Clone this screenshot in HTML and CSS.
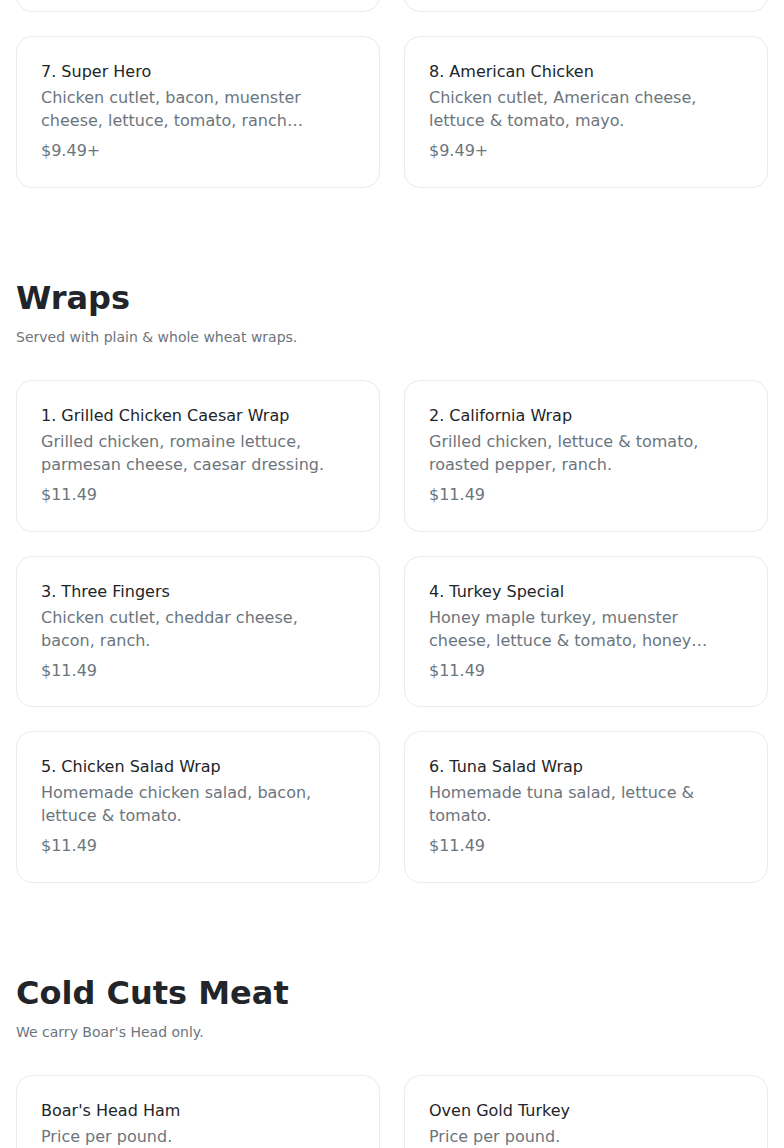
FILE: index.html
```html
<!DOCTYPE html>
<html lang="en">
<head>
<meta charset="utf-8">
<title>Menu</title>
<link rel="stylesheet" href="styles.css">
</head>
<body>
<main class="menu">
  <section class="section section-first">
    <div class="grid">
      <div class="card">
        <div class="item-name">5. Chicken Parm Hero</div>
        <div class="item-desc">Chicken cutlet, marinara sauce, mozzarella cheese.</div>
        <div class="item-price">$9.49+</div>
      </div>
      <div class="card">
        <div class="item-name">6. Buffalo Chicken</div>
        <div class="item-desc">Buffalo chicken, lettuce &amp; tomato, blue cheese.</div>
        <div class="item-price">$9.49+</div>
      </div>
      <div class="card">
        <div class="item-name">7. Super Hero</div>
        <div class="item-desc">Chicken cutlet, bacon, muenster cheese, lettuce, tomato, ranch dressing.</div>
        <div class="item-price">$9.49+</div>
      </div>
      <div class="card">
        <div class="item-name">8. American Chicken</div>
        <div class="item-desc">Chicken cutlet, American cheese, lettuce &amp; tomato, mayo.</div>
        <div class="item-price">$9.49+</div>
      </div>
    </div>
  </section>

  <section class="section">
    <h2 class="section-title">Wraps</h2>
    <p class="section-sub">Served with plain &amp; whole wheat wraps.</p>
    <div class="grid">
      <div class="card">
        <div class="item-name">1. Grilled Chicken Caesar Wrap</div>
        <div class="item-desc">Grilled chicken, romaine lettuce, parmesan cheese, caesar dressing.</div>
        <div class="item-price">$11.49</div>
      </div>
      <div class="card">
        <div class="item-name">2. California Wrap</div>
        <div class="item-desc">Grilled chicken, lettuce &amp; tomato, roasted pepper, ranch.</div>
        <div class="item-price">$11.49</div>
      </div>
      <div class="card">
        <div class="item-name">3. Three Fingers</div>
        <div class="item-desc">Chicken cutlet, cheddar cheese, bacon, ranch.</div>
        <div class="item-price">$11.49</div>
      </div>
      <div class="card">
        <div class="item-name">4. Turkey Special</div>
        <div class="item-desc">Honey maple turkey, muenster cheese, lettuce &amp; tomato, honey mustard.</div>
        <div class="item-price">$11.49</div>
      </div>
      <div class="card">
        <div class="item-name">5. Chicken Salad Wrap</div>
        <div class="item-desc">Homemade chicken salad, bacon, lettuce &amp; tomato.</div>
        <div class="item-price">$11.49</div>
      </div>
      <div class="card">
        <div class="item-name">6. Tuna Salad Wrap</div>
        <div class="item-desc">Homemade tuna salad, lettuce &amp; tomato.</div>
        <div class="item-price">$11.49</div>
      </div>
    </div>
  </section>

  <section class="section">
    <h2 class="section-title">Cold Cuts Meat</h2>
    <p class="section-sub">We carry Boar's Head only.</p>
    <div class="grid">
      <div class="card">
        <div class="item-name">Boar's Head Ham</div>
        <div class="item-desc">Price per pound.</div>
        <div class="item-price">$12.99</div>
      </div>
      <div class="card">
        <div class="item-name">Oven Gold Turkey</div>
        <div class="item-desc">Price per pound.</div>
        <div class="item-price">$12.99</div>
      </div>
    </div>
  </section>
</main>
</body>
</html>
```

FILE: styles.css
```css
html, body {
  margin: 0;
  padding: 0;
  background: #ffffff;
}

body {
  font-family: "DejaVu Sans", sans-serif;
  color: #212529;
}

.menu {
  padding: 0 16px 40px;
  margin-top: -139.5px;
}

.section {
  margin-top: 91.25px;
}

.section-first {
  margin-top: 0;
}

.section-title {
  margin: 0;
  font-size: 32px;
  line-height: 38.4px;
  font-weight: 700;
  color: #212529;
}

.section-sub {
  margin: 10px 0 32px;
  font-size: 14px;
  line-height: 21px;
  color: #6c757d;
}

.grid {
  display: grid;
  grid-template-columns: 1fr 1fr;
  column-gap: 24px;
  row-gap: 24px;
}

.card {
  border: 1px solid #ebebeb;
  border-radius: 16px;
  padding: 23px 24px 23.5px;
  background: #fff;
}

.item-name {
  font-size: 16px;
  line-height: 24px;
  color: #212529;
}

.item-desc {
  margin-top: 2px;
  font-size: 16px;
  line-height: 23px;
  color: #6c757d;
  height: 46px;
  overflow: hidden;
  display: -webkit-box;
  -webkit-line-clamp: 2;
  -webkit-box-orient: vertical;
}

.item-price {
  margin-top: 7px;
  font-size: 16px;
  line-height: 24px;
  color: #6c757d;
}
```
